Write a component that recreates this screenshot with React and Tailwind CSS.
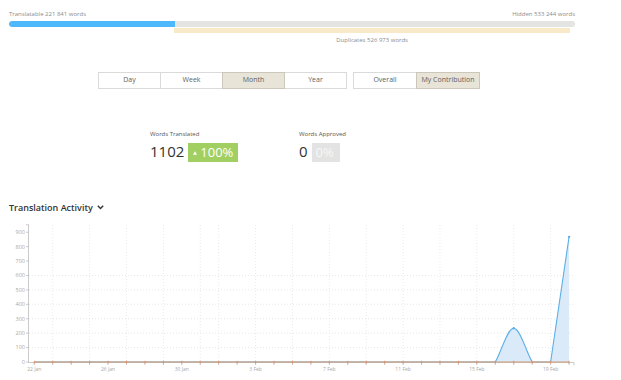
import React from "react";

const X = (i) => 34.3 + i * 18.44;
const Y = (v) => 362 - v * 0.1442;

function Chart() {
  const days = Array.from({ length: 30 }, (_, i) => i);
  const vGrid = [1, 3, 5, 7, 9, 10, 12, 14, 16, 18, 20, 22, 24, 26, 28];
  const hGrid = [100, 200, 300, 400, 500, 600];
  const yTicks = [0, 100, 200, 300, 400, 500, 600, 700, 800, 900];
  const xLabels = [
    [0, "22 Jan"],
    [4, "26 Jan"],
    [8, "30 Jan"],
    [12, "3 Feb"],
    [16, "7 Feb"],
    [20, "11 Feb"],
    [24, "15 Feb"],
    [28, "19 Feb"],
  ];
  const x25 = X(25), x26 = X(26), x27 = X(27), x28 = X(28), x29 = X(29);
  const peak = Y(234);
  const top = Y(868);
  const bump = `M${x25},362 C${x25 + 6},352 ${x26 - 6.5},${peak} ${x26},${peak} C${x26 + 6.5},${peak} ${x27 - 6},352 ${x27},362`;
  return (
    <svg width="621" height="162" viewBox="0 218 621 162" className="block">
      {vGrid.map((i) => (
        <line key={"v" + i} x1={X(i)} x2={X(i)} y1="225" y2="362" stroke="#e4e4e4" strokeWidth="0.8" strokeDasharray="1 2" />
      ))}
      {hGrid.map((v) => (
        <line key={"h" + v} x1="29" x2="574" y1={Y(v)} y2={Y(v)} stroke="#e2e2e2" strokeWidth="0.8" strokeDasharray="1 2" />
      ))}
      <path d={bump + " Z"} fill="#dbeaf9" />
      <path d={`M${x28},362 L${x29},${top} L${x29},362 Z`} fill="#dbeaf9" />
      <path d={`M${X(0)},362 L${x25},362 ` + bump.slice(bump.indexOf("C")) + ` L${x28},362 L${x29},${top}`} fill="none" stroke="#5cafe8" strokeWidth="1.1" />
      <circle cx={x26} cy={peak} r="1.2" fill="#5cafe8" />
      <circle cx={x29} cy={top} r="1.2" fill="#5cafe8" />
      <line x1="28.5" x2="28.5" y1="224.5" y2="362.5" stroke="#bdbdbd" strokeWidth="0.8" />
      <line x1="26" x2="28.5" y1="224.8" y2="224.8" stroke="#bdbdbd" strokeWidth="0.8" />
      {yTicks.map((v) => (
        <g key={"y" + v}>
          <line x1="26" x2="28.5" y1={Y(v)} y2={Y(v)} stroke="#bdbdbd" strokeWidth="0.8" />
          <text x="25" y={Y(v)} dy="0.34em" textAnchor="end" fontSize="5.5" fill="#a8a8a8" fontFamily="Open Sans, sans-serif">
            {v}
          </text>
        </g>
      ))}
      <line x1="28.5" x2="574" y1="362.5" y2="362.5" stroke="#bdbdbd" strokeWidth="0.8" />
      <line x1="574" x2="574" y1="362.5" y2="365.5" stroke="#bdbdbd" strokeWidth="0.8" />
      {days.map((i) => (
        <line key={"t" + i} x1={X(i)} x2={X(i)} y1="362.5" y2="365" stroke="#bdbdbd" strokeWidth="0.8" />
      ))}
      <line x1={X(0)} x2={x29} y1="362" y2="362" stroke="#cf9a76" strokeWidth="1.1" />
      {days.map((i) => (
        <line key={"o" + i} x1={X(i)} x2={X(i)} y1="360.8" y2="363.6" stroke="#e8895a" strokeWidth="0.9" />
      ))}
      {xLabels.map(([i, t]) => (
        <text key={t} x={X(i)} y="370.5" textAnchor="middle" fontSize="5" fill="#a8a8a8" fontFamily="Open Sans, sans-serif">
          {t}
        </text>
      ))}
    </svg>
  );
}

function Btn({ children, active, w, first }) {
  return (
    <div
      className={
        "h-[17px] flex items-center justify-center text-[7px] text-[#616161] border " +
        (active ? "bg-[#e8e4d8] border-[#cbc7bb] z-10 " : "bg-white border-[#dadada] ") +
        (first ? "" : "-ml-px ") +
        w
      }
    >
      {children}
    </div>
  );
}

export default function App() {
  return (
    <div className="w-[621px] h-[380px] bg-white overflow-hidden font-['Open_Sans',sans-serif]">
      <div className="pl-[9px] w-[575px]">
        <div className="pt-[10px] flex justify-between text-[6px] leading-[8px] text-[#8c8c8c]">
          <span>Translatable 221 841 words</span>
          <span>Hidden 533 244 words</span>
        </div>
        <div className="mt-[3px] h-[6px] rounded-full bg-[#e4e4e2] flex overflow-hidden">
          <div className="w-[29.4%] h-full bg-[#4db8fa] rounded-l-full" />
        </div>
        <div className="mt-[1px] h-[5px] ml-[29.2%] w-[69.9%] bg-[#f8e9c9]" />
        <div className="ml-[29.2%] w-[69.9%] mt-[3px] text-center text-[6px] leading-[8px] text-[#8c8c8c]">
          Duplicates 526 973 words
        </div>
      </div>

      <div className="mt-[28px] ml-[98px] flex">
        <div className="flex">
          <Btn first w="w-[63px]">Day</Btn>
          <Btn w="w-[63px]">Week</Btn>
          <Btn active w="w-[63px]">Month</Btn>
          <Btn w="w-[63px]">Year</Btn>
        </div>
        <div className="flex ml-[6px]">
          <Btn first w="w-[64px]">Overall</Btn>
          <Btn active w="w-[64px]">My Contribution</Btn>
        </div>
      </div>

      <div className="mt-[41px] ml-[150px] flex">
        <div className="w-[149px]">
          <div className="text-[6px] leading-[8px] text-[#555]">Words Translated</div>
          <div className="mt-[5px] flex items-start h-[19px]">
            <span className="text-[15px] leading-[17px] text-[#333]">1102</span>
            <div className="ml-[4px] h-[19px] bg-[#a2cf62] flex items-center text-white">
              <svg width="4" height="4" viewBox="0 0 4 4" className="ml-[5px]">
                <path d="M2 0.3 L4 3.7 L0 3.7 Z" fill="#ffffff" />
              </svg>
              <span className="ml-[3px] mr-[5px] text-[13px] leading-[19px]">100%</span>
            </div>
          </div>
        </div>
        <div>
          <div className="text-[6px] leading-[8px] text-[#555]">Words Approved</div>
          <div className="mt-[5px] flex items-start h-[19px]">
            <span className="text-[15px] leading-[17px] text-[#333]">0</span>
            <div className="ml-[4px] h-[19px] bg-[#e3e3e3] flex items-center text-[#f7f7f7]">
              <span className="ml-[4px] mr-[6px] text-[13px] leading-[19px]">0%</span>
            </div>
          </div>
        </div>
      </div>

      <div className="mt-[39px] ml-[9px] h-[12px] flex items-center">
        <span className="text-[9px] leading-[11px] font-semibold text-[#333]">Translation Activity</span>
        <svg width="7" height="5" viewBox="0 0 7 5" className="ml-[4px]">
          <path d="M0.8 0.8 L3.5 3.6 L6.2 0.8" fill="none" stroke="#333" strokeWidth="1.4" />
        </svg>
      </div>

      <div className="mt-[5px]">
        <Chart />
      </div>
    </div>
  );
}
